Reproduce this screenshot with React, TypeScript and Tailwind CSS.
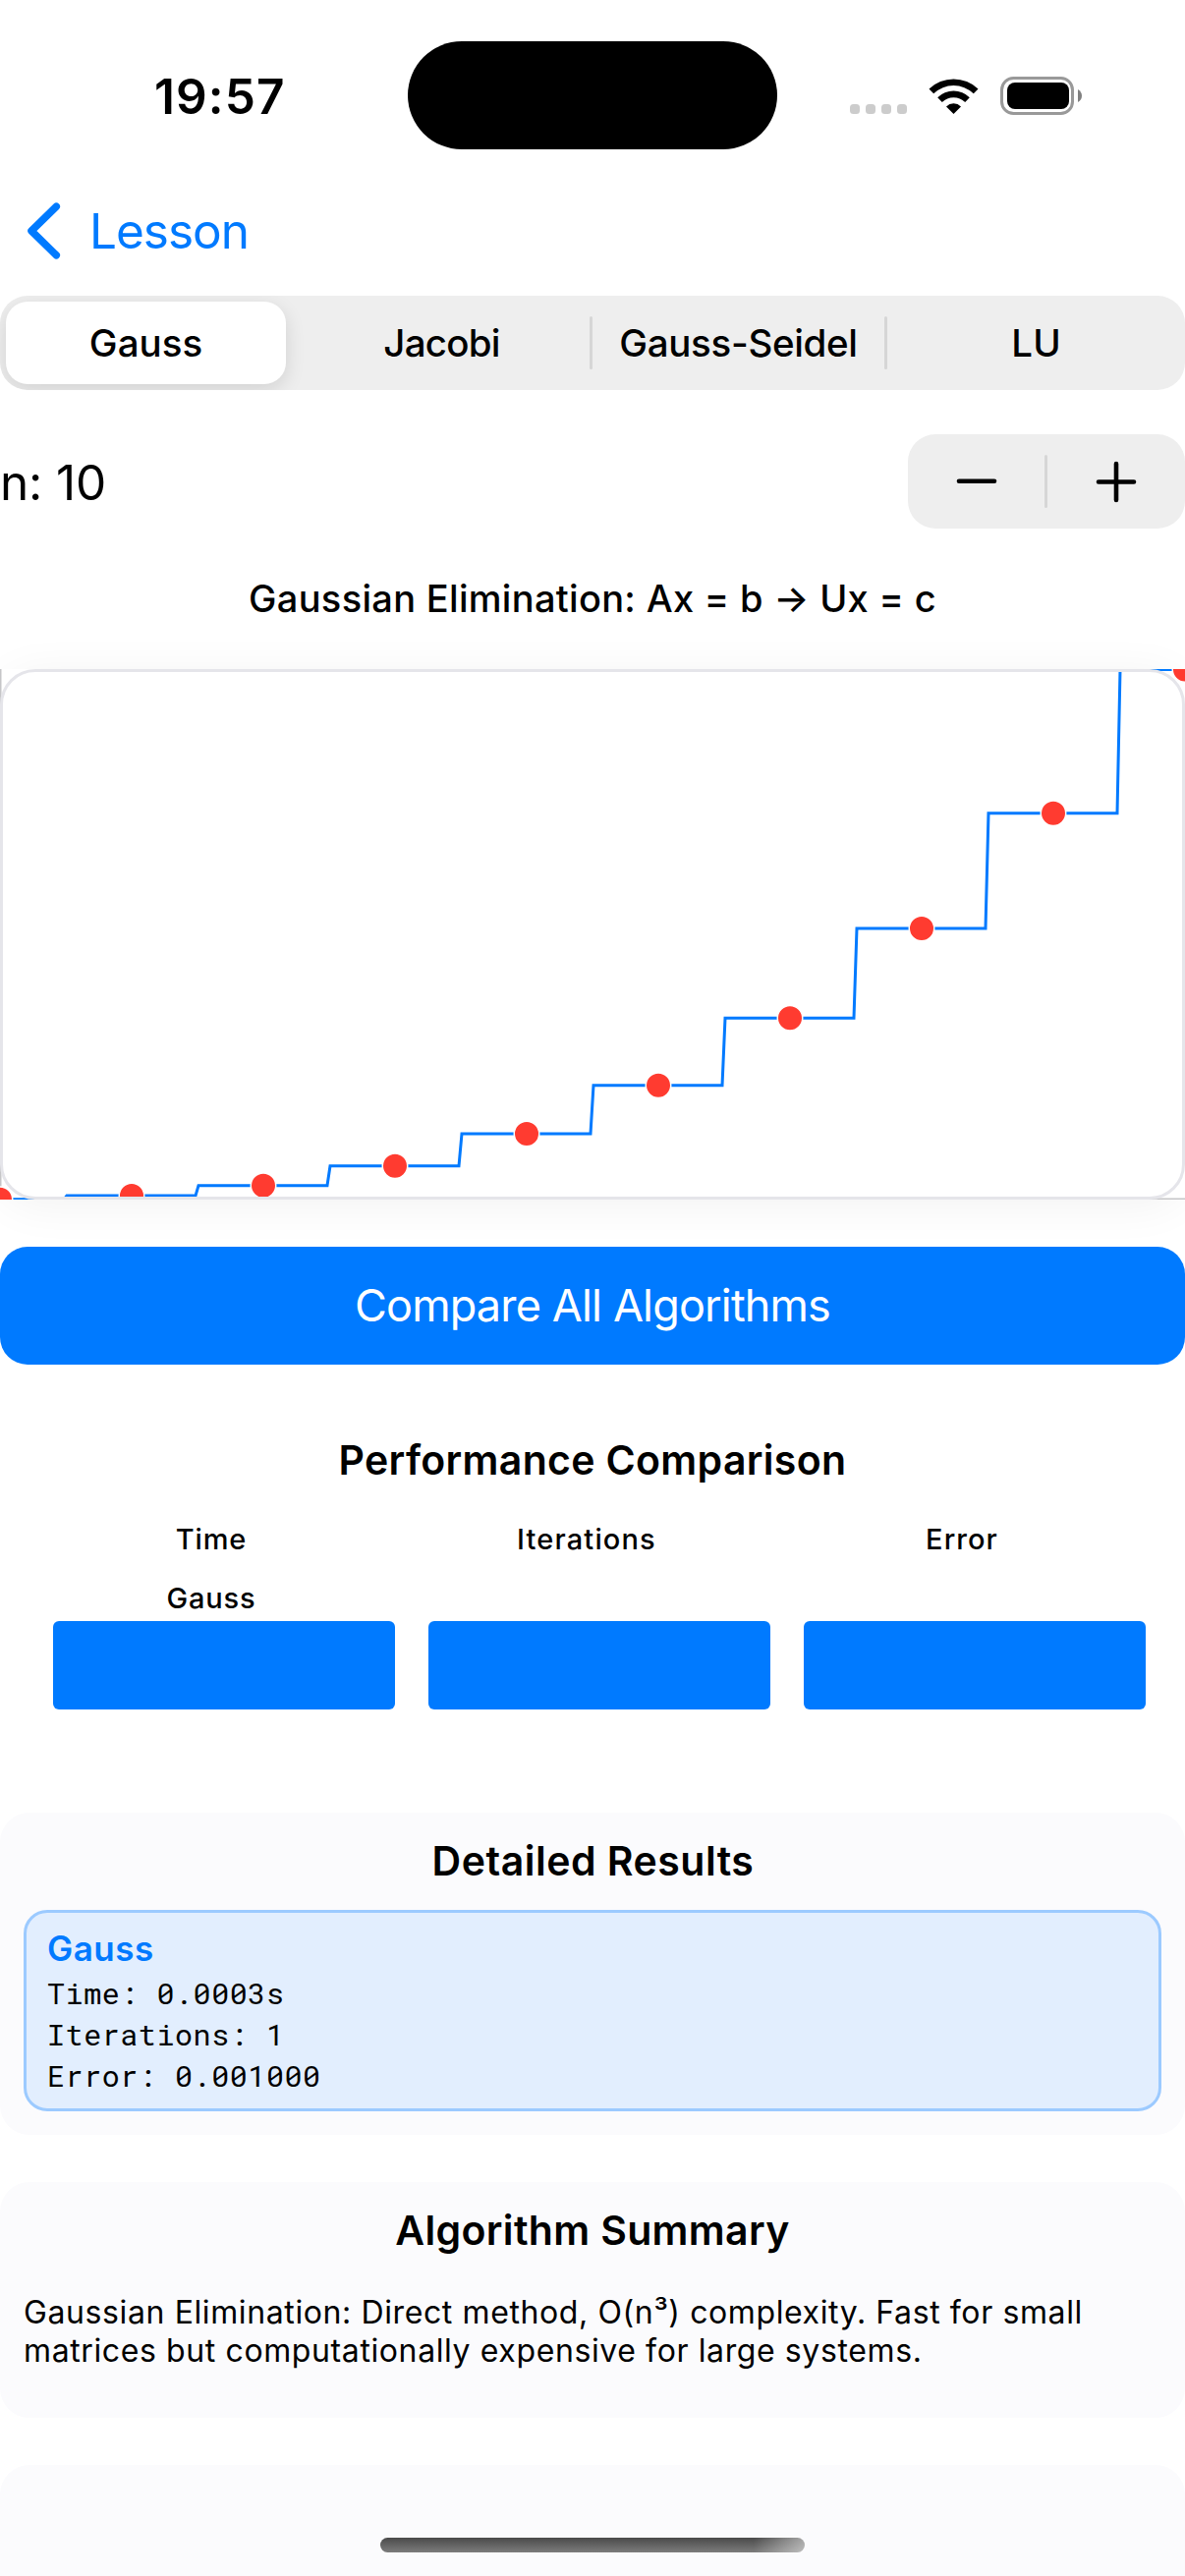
const CHART_W = 1206;
const CHART_H = 540;

// Cubic cost growth for matrix sizes 1..10, relative to the largest.
const points = Array.from({ length: 10 }, (_, i) => ({
  x: i * 134,
  y: CHART_H - Math.pow((i + 1) / 10, 3) * CHART_H + 0.4,
}));

const linePath = points
  .map((p, i) => {
    const start = i === 0 ? 0 : p.x - 66;
    const end = i === points.length - 1 ? CHART_W : p.x + 65;
    return `${i === 0 ? "M" : "L"}${start} ${p.y} L${end} ${p.y}`;
  })
  .join(" ");

function StatusBar() {
  return (
    <header className="flex h-[176px] items-center">
      <div className="mt-5 w-[415px] pl-[157px] text-[49.5px] leading-[60px] font-semibold tracking-[1.12px]">
        19:57
      </div>
      <div className="mt-[18px] h-[110px] w-[376px] rounded-[55px] bg-black" />
      <svg className="mt-5 ml-[73px]" width="240" height="44" viewBox="0 0 240 44">
        <g fill="#cccccc">
          <rect x="1" y="30" width="10" height="10" rx="3.5" />
          <rect x="17" y="30" width="10" height="10" rx="3.5" />
          <rect x="33" y="30" width="10" height="10" rx="3.5" />
          <rect x="49" y="30" width="10" height="10" rx="3.5" />
        </g>
        <g transform="translate(81 3)">
          <path d="M0.5 11.5 A36 36 0 0 1 50.5 11.5 L45.8 16.2 A29.3 29.3 0 0 0 5.2 16.2 Z" fill="#000" />
          <path d="M9.2 20.2 A23.2 23.2 0 0 1 41.8 20.2 L37.2 25 A16.7 16.7 0 0 0 13.8 25 Z" fill="#000" />
          <path d="M18 29.4 A10.7 10.7 0 0 1 33 29.4 L25.5 37 Z" fill="#000" />
        </g>
        <rect x="155.5" y="3.5" width="72" height="36" rx="12" fill="none" stroke="#999999" strokeWidth="3" />
        <rect x="161" y="8" width="63" height="27" rx="8" fill="#000" />
        <path d="M233 15 Q237 17.5 237 21.5 Q237 25.5 233 28 Z" fill="#808080" />
      </svg>
    </header>
  );
}

function Segmented() {
  return (
    <div className="mt-2 flex h-24 items-center overflow-hidden rounded-[28px] bg-[#eeeeee] text-[38.5px] leading-[46px] font-medium">
      <div className="ml-[6px] flex h-21 w-[285px] items-center justify-center rounded-[22px] bg-white shadow-[0_6px_20px_rgba(0,0,0,0.12)]">
        Gauss
      </div>
      <div className="ml-3 w-[297px] pr-1 text-center tracking-[-0.76px]">Jacobi</div>
      <div className="h-[54px] w-[3px] rounded-full bg-[#d6d6d6]" />
      <div className="w-[297px] text-center tracking-[-0.33px]">Gauss-Seidel</div>
      <div className="h-[54px] w-[3px] rounded-full bg-[#d6d6d6]" />
      <div className="flex-1 text-center">LU</div>
    </div>
  );
}

function SizeStepper() {
  return (
    <div className="mt-[45px] flex h-24 items-center justify-between">
      <div className="mt-[2px] text-[49.5px] leading-[60px] tracking-[-0.14px]">n: 10</div>
      <div className="flex h-24 w-[282px] items-center rounded-[28px] bg-[#eeeeee]">
        <div className="flex w-[139px] justify-center">
          <svg width="44" height="44" viewBox="0 0 44 44" stroke="#000" strokeWidth="4.6" strokeLinecap="round">
            <path d="M4 21.7H40" />
          </svg>
        </div>
        <div className="h-[54px] w-[3px] rounded-full bg-[#d6d6d6]" />
        <div className="flex flex-1 justify-center">
          <svg width="44" height="44" viewBox="0 0 44 44" stroke="#000" strokeWidth="4.6" strokeLinecap="round">
            <path d="M4 22.5H40M22 4V41" />
          </svg>
        </div>
      </div>
    </div>
  );
}

function CostChart() {
  return (
    <div className="relative mt-[44px] h-[540px] rounded-[36px] shadow-[0_6px_48px_rgba(0,0,0,0.055)]">
      <svg className="block bg-white" width={CHART_W} height={CHART_H} viewBox="0 0 1206 540">
        <path d="M0.75 0V540M0 539.25H1206" stroke="#c6c6c8" strokeWidth="1.5" fill="none" />
        <path d={linePath} stroke="#007aff" strokeWidth="3" fill="none" />
        {points.map((p) => (
          <circle key={p.x} cx={p.x} cy={p.y} r="12.75" fill="#ff3b30" stroke="#fff" strokeWidth="1.5" />
        ))}
      </svg>
      <div className="absolute inset-0 rounded-[36px] border-3 border-[#e5e5ea]" />
    </div>
  );
}

function Bars() {
  return (
    <section className="mt-[72px]">
      <h2 className="text-center text-[41px] leading-[51px] font-semibold tracking-[0.33px]">
        Performance Comparison
      </h2>
      <div className="mt-[37px] ml-6 grid w-[1146px] grid-cols-3 text-center text-[29px] leading-9 font-medium">
        <div className="tracking-[0.87px]">Time</div>
        <div className="tracking-[1.15px]">Iterations</div>
        <div className="tracking-[1.06px]">Error</div>
        <div className="mt-6 tracking-[0.85px]">Gauss</div>
      </div>
      <div className="mt-[5px] mr-10 ml-[54px] grid grid-cols-3 gap-[34px]">
        <div className="h-[90px] rounded-[6px] bg-[#007aff]" />
        <div className="h-[90px] rounded-[6px] bg-[#007aff]" />
        <div className="h-[90px] rounded-[6px] bg-[#007aff]" />
      </div>
    </section>
  );
}

function Results() {
  return (
    <section className="mt-[105px] h-[328px] rounded-[30px] bg-[#fbfbfd] px-6 pt-6">
      <h2 className="pl-[1px] text-center text-[41px] leading-[51px] font-semibold tracking-[0.5px]">Detailed Results</h2>
      <div className="mt-6 h-[205px] rounded-[24px] border-3 border-[#9ccaff] bg-[#e2eefe] pt-[15px] pl-[21px]">
        <h3 className="text-[35px] leading-[42px] font-semibold tracking-[0.51px] text-[#007aff]">Gauss</h3>
        <div className="mt-1 font-['Roboto_Mono','Liberation_Mono',monospace] text-[30px] leading-[42px] tracking-[0.57px]">
          <p>Time: 0.0003s</p>
          <p>Iterations: 1</p>
          <p>Error: 0.001000</p>
        </div>
      </div>
    </section>
  );
}

function Summary() {
  return (
    <section className="mt-12 h-60 rounded-[30px] bg-[#fbfbfd] px-6 pt-6">
      <h2 className="text-center text-[41px] leading-[51px] font-semibold tracking-[0.34px]">Algorithm Summary</h2>
      <p className="mt-[38px] text-[32px] leading-[39px] tracking-[0.61px]">
        Gaussian Elimination: Direct method, O(n³) complexity. Fast for small
        <br />
        matrices but computationally expensive for large systems.
      </p>
    </section>
  );
}

export default function App() {
  return (
    <div className="relative h-[2622px] w-[1206px] overflow-hidden bg-white font-['Inter',sans-serif] text-black">
      <StatusBar />
      <nav className="flex h-[117px] items-center pl-[25px] text-[#007aff]">
        <svg width="40" height="62" viewBox="0 0 40 62" fill="none" stroke="#007aff" strokeWidth="7.5" strokeLinecap="round" strokeLinejoin="round">
          <path d="M32.3 6.2L7 31L32.3 55.8" />
        </svg>
        <span className="ml-[26px] text-[49.5px] leading-[60px] tracking-[-1.02px]">Lesson</span>
      </nav>
      <Segmented />
      <SizeStepper />
      <h1 className="mt-[44px] text-center text-[38px] leading-[55px] font-medium tracking-[0.31px]">
        Gaussian Elimination: Ax = b → Ux = c
      </h1>
      <CostChart />
      <button className="relative mt-12 flex h-[120px] w-full items-center justify-center rounded-[28px] bg-[#007aff] text-[45px] leading-[56px] tracking-[-0.85px] text-white">
        Compare All Algorithms
      </button>
      <Bars />
      <Results />
      <Summary />
      <section className="mt-12 h-60 rounded-[30px] bg-[#fbfbfd]" />
      <div className="absolute top-[2583px] left-[387px] h-[15px] w-[432px] rounded-full bg-[linear-gradient(to_right,transparent_88%,rgba(255,255,255,0.5)),linear-gradient(to_bottom,#4a4a4a,#7c7c7c)]" />
    </div>
  );
}
